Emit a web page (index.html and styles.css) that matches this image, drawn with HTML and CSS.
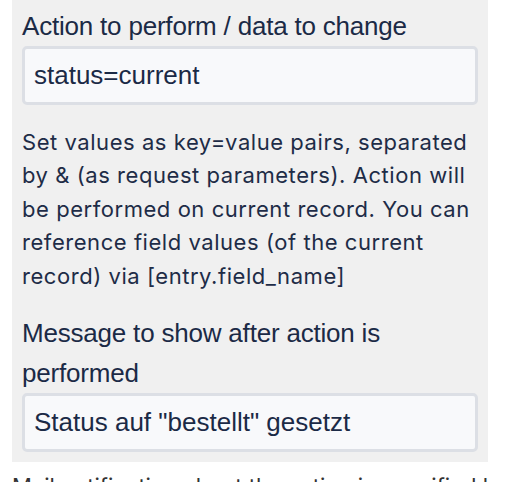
FILE: index.html
```html
<!DOCTYPE html>
<html>
<head>
<meta charset="utf-8">
<link rel="stylesheet" href="styles.css">
</head>
<body>
<div class="panel">
  <label class="label">Action to perform / data to change</label>
  <div class="input">status=current</div>
  <p class="help">Set values as key=value pairs, separated by &amp; (as request parameters). Action will be performed on current record. You can reference field values (of the current record) via [entry.field_name]</p>
  <label class="label">Message to show after action is performed</label>
  <div class="input">Status auf "bestellt" gesetzt</div>
</div>
<p class="next">Mail notification about the action is specified here</p>
</body>
</html>
```
FILE: styles.css
```css
html, body {
  margin: 0;
  padding: 0;
  background: #ffffff;
}
body {
  width: 512px;
  height: 482px;
  overflow: hidden;
}
.panel {
  margin-left: 12px;
  width: 476px;
  box-sizing: border-box;
  padding: 6px 10px 10px 10px;
  background: #f0f0f0;
  color: #1b2a46;
}
.label {
  display: block;
  font-family: "Liberation Sans", Arial, sans-serif;
  font-size: 26px;
  line-height: 40px;
  letter-spacing: -0.2px;
}
.input {
  box-sizing: border-box;
  height: 59px;
  border: 3px solid #dcdfe5;
  border-radius: 5px;
  background: #f8f9fb;
  padding: 0 9px;
  display: flex;
  align-items: center;
  font-family: "Liberation Sans", Arial, sans-serif;
  font-size: 26px;
  color: #1b2a46;
}
.help {
  margin: 21px 0 20px 0;
  font-family: "Inter", "Noto Sans", sans-serif;
  font-size: 22px;
  line-height: 33.4px;
  letter-spacing: 0.55px;
  color: #1e2c47;
}
.next {
  margin: 8px 0 0 12px;
  white-space: nowrap;
  font-family: "Inter", sans-serif;
  font-size: 22px;
  line-height: 33px;
  color: #333;
}
```
